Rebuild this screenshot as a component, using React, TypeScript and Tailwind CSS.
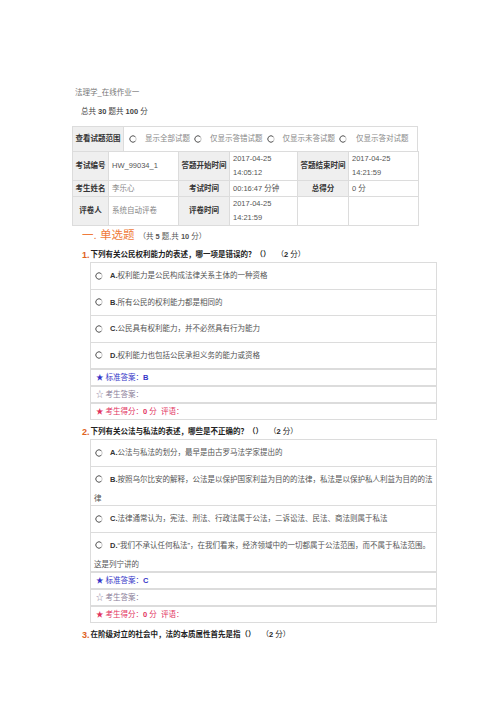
import React from 'react';

const font = "font-['Liberation_Sans','Noto_Sans_CJK_SC',sans-serif]";

// small grey radio, drawn the way the old browser skin paints it
function Radio() {
  return (
    <svg width="8" height="8" viewBox="0 0 8 8" className="block shrink-0">
      <circle cx="4" cy="4" r="3.2" fill="#fff" stroke="#c8c8c8" strokeWidth="1" />
      <path d="M6.26 1.74 A3.2 3.2 0 1 0 6.26 6.26" fill="none" stroke="#6a6a6a" strokeWidth="1" />
    </svg>
  );
}

interface OptionProps {
  letter: string;
  text: string;
}

function Option({ letter, text }: OptionProps) {
  return (
    <div className="pl-[3px] pr-[2px] leading-[13px] text-[#555]">
      <span className="inline-flex h-[25.5px] w-[8px] items-center align-middle ml-[1px] mr-[7px]">
        <Radio />
      </span>
      <span className="font-bold text-[#333]">{letter}.</span>
      {text}
    </div>
  );
}

function Answers({ answer }: { answer: string }) {
  return (
    <div className="leading-[15px]">
      <div className="border border-[#dcdcdc] pl-[5px] text-[#3535c8]">
        ★ 标准答案：<span className="font-bold">{answer}</span>
      </div>
      <div className="border border-[#dcdcdc] pl-[5px] text-[#8a7d98]">☆ 考生答案：</div>
      <div className="border border-[#dcdcdc] pl-[5px] text-[#e2335f]">
        ★ 考生得分：<span className="font-bold">0</span> 分&nbsp; 评语：
      </div>
    </div>
  );
}

interface QuestionProps {
  no: number;
  title: string;
  options?: OptionProps[];
  answer?: string;
}

function Question({ no, title, options, answer }: QuestionProps) {
  return (
    <div className="mt-[5px]">
      <div className="flex h-[14px] items-center whitespace-nowrap pl-[10px] leading-none font-bold text-[#222]">
        <span className="text-[9px] text-[#e0621e] mr-[1px]">{no}.</span>
        <span>{title}</span>
        <span className="ml-[6px] font-normal">
          （<span className="font-bold">2</span> 分）
        </span>
      </div>
      {options && (
        <div className="ml-[18px]">
          <div className="border border-[#dcdcdc] divide-y divide-[#dcdcdc]">
            {options.map(o => (
              <Option key={o.letter} {...o} />
            ))}
          </div>
          {answer && <Answers answer={answer} />}
        </div>
      )}
    </div>
  );
}

const q1: OptionProps[] = [
  { letter: 'A', text: '权利能力是公民构成法律关系主体的一种资格' },
  { letter: 'B', text: '所有公民的权利能力都是相同的' },
  { letter: 'C', text: '公民具有权利能力，并不必然具有行为能力' },
  { letter: 'D', text: '权利能力也包括公民承担义务的能力或资格' },
];

const q2: OptionProps[] = [
  { letter: 'A', text: '公法与私法的划分，最早是由古罗马法学家提出的' },
  {
    letter: 'B',
    text: '按照乌尔比安的解释，公法是以保护国家利益为目的的法律，私法是以保护私人利益为目的的法律',
  },
  { letter: 'C', text: '法律通常认为，宪法、刑法、行政法属于公法，二诉讼法、民法、商法则属于私法' },
  {
    letter: 'D',
    text: '“我们不承认任何私法”，在我们看来，经济领域中的一切都属于公法范围，而不属于私法范围。这是列宁讲的',
  },
];

const th = 'border border-[#dcdcdc] bg-[#efefef] text-center font-bold text-[#333]';
const td = 'border border-[#dcdcdc] pl-[3px] text-[#555]';

function InfoTable() {
  return (
    <div className="mt-[7px] w-[346px]">
      <div className="grid grid-cols-[51px_1fr] h-[26px] border border-[#dcdcdc]">
        <div className="flex items-center justify-center bg-[#efefef] border-r border-[#dcdcdc] font-bold text-[#333]">
          查看试题范围
        </div>
        <div className="flex items-center pl-[5px] text-[#888]">
          <Radio />
          <span className="ml-[8px] mr-[4px]">显示全部试题</span>
          <Radio />
          <span className="ml-[8px] mr-[4px]">仅显示答错试题</span>
          <Radio />
          <span className="ml-[8px] mr-[4px]">仅显示未答试题</span>
          <Radio />
          <span className="ml-[9px]">仅显示答对试题</span>
        </div>
      </div>
      <table className="w-[346px] table-fixed border-collapse leading-[14px] -mt-px">
        <colgroup>
          <col className="w-[36px]" />
          <col className="w-[70px]" />
          <col className="w-[51px]" />
          <col className="w-[68px]" />
          <col className="w-[51px]" />
          <col className="w-[70px]" />
        </colgroup>
        <tbody>
          <tr className="h-[29px]">
            <td className={th}>考试编号</td>
            <td className={td}>HW_99034_1</td>
            <td className={th}>答题开始时间</td>
            <td className={td}>
              2017-04-25
              <br />
              14:05:12
            </td>
            <td className={th}>答题结束时间</td>
            <td className={td}>
              2017-04-25
              <br />
              14:21:59
            </td>
          </tr>
          <tr className="h-[16px]">
            <td className={th}>考生姓名</td>
            <td className={`${td} text-[#888]`}>李乐心</td>
            <td className={th}>考试时间</td>
            <td className={td}>00:16:47 分钟</td>
            <td className={th}>总得分</td>
            <td className={td}>0 分</td>
          </tr>
          <tr className="h-[28px]">
            <td className={th}>评卷人</td>
            <td className={`${td} text-[#888]`}>系统自动评卷</td>
            <td className={th}>评卷时间</td>
            <td className={td}>
              2017-04-25
              <br />
              14:21:59
            </td>
            <td className={td}></td>
            <td className={td}></td>
          </tr>
        </tbody>
      </table>
    </div>
  );
}

export default function App() {
  return (
    <div className={`h-[702px] w-full overflow-hidden bg-white text-[7.5px] ${font}`}>
      <div className="ml-[72px] w-[365px] pt-[86px]">
        <div className="pl-[3px] leading-[14px] text-[#777]">法理学_在线作业一</div>
        <div className="mt-[5px] pl-[9px] leading-[14px] text-[#444]">
          总共 <span className="font-bold">30</span> 题共 <span className="font-bold">100</span> 分
        </div>

        <InfoTable />

        <div className="mt-[3px] flex h-[14px] items-center pl-[10px] leading-none">
          <span className="text-[11.5px] text-[#ef7b3c]">一. 单选题</span>
          <span className="ml-[4px] mt-[1px] text-[#555]">
            （共 <span className="font-bold">5</span> 题,共 <span className="font-bold">10</span> 分）
          </span>
        </div>

        <Question no={1} title="下列有关公民权利能力的表述，哪一项是错误的？（）" options={q1} answer="B" />
        <Question no={2} title="下列有关公法与私法的表述，哪些是不正确的？（）" options={q2} answer="C" />
        <Question no={3} title="在阶级对立的社会中，法的本质属性首先是指（）" />
      </div>
    </div>
  );
}
